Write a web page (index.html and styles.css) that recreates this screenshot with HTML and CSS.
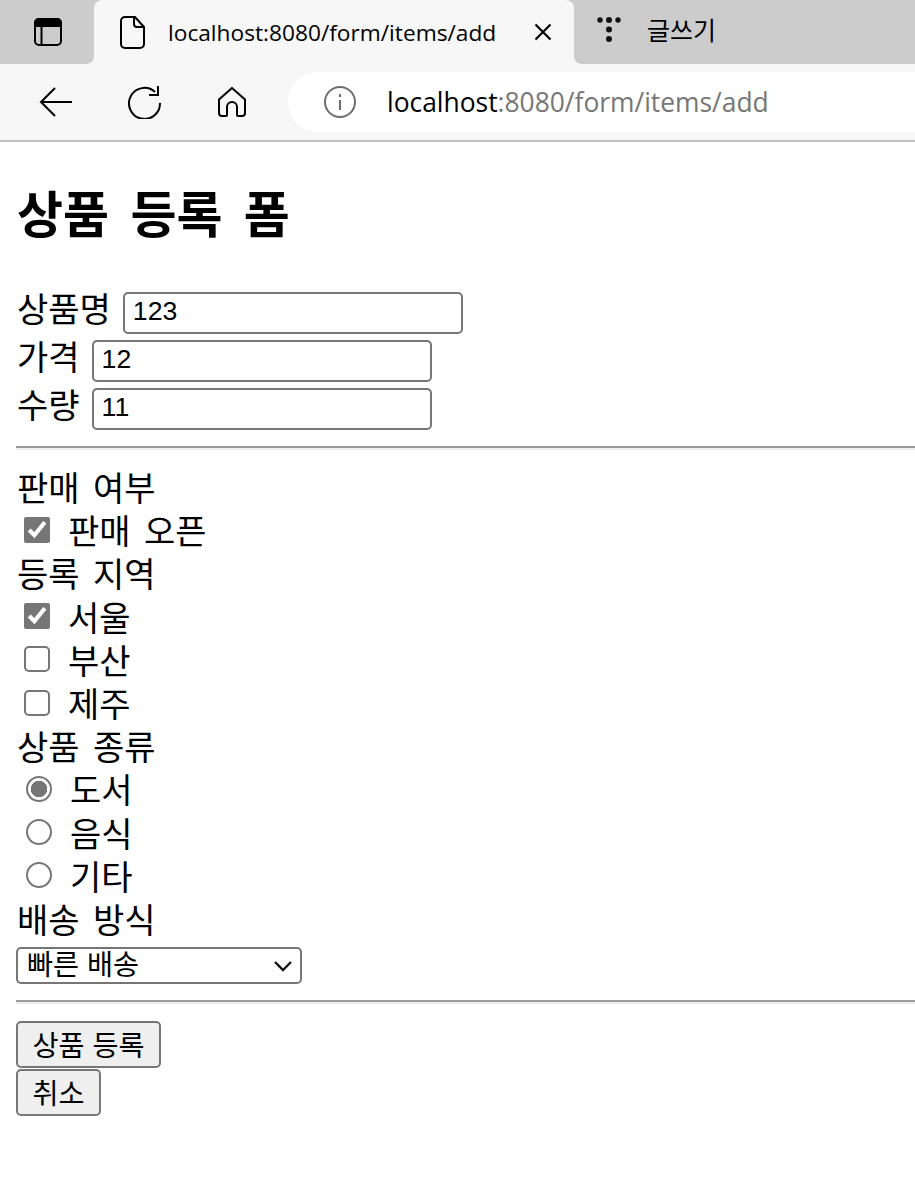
FILE: index.html
```html
<!DOCTYPE html>
<html lang="ko">
<head>
    <meta charset="UTF-8">
    <title>상품 등록 폼</title>
    <link rel="stylesheet" href="styles.css">
</head>
<body>
    <div class="tab-strip">
        <div class="sidebar-btn">
            <svg width="30" height="30" viewBox="0 0 30 30" fill="none" stroke="#000" stroke-width="2">
                <rect x="2" y="2" width="26" height="26" rx="4"/>
                <path d="M2 9V6a4 4 0 0 1 4-4h18a4 4 0 0 1 4 4v3z" fill="#000"/>
                <path d="M8.500 9v19"/>
            </svg>
        </div>
        <div class="tab">
            <svg width="26" height="34" viewBox="0 0 26 34" fill="none" stroke="#000" stroke-width="2">
                <path d="M5 2h10l9 10v17a4 4 0 0 1-4 4H5a4 4 0 0 1-4-4V6a4 4 0 0 1 4-4z"/>
                <path d="M14 2v7a3 3 0 0 0 3 3h7"/>
            </svg>
            <span class="tab-title">localhost:8080/form/items/add</span>
            <svg class="tab-close" width="18" height="18" viewBox="0 0 18 18" stroke="#000" stroke-width="2.200">
                <path d="M1.500 1.500l15 15M16.500 1.500l-15 15"/>
            </svg>
        </div>
        <div class="other-tab">
            <svg width="24" height="26" viewBox="0 0 24 26" fill="#111">
                <circle cx="3" cy="4" r="2.700"/>
                <circle cx="12" cy="4" r="3"/>
                <circle cx="21" cy="4" r="2.700"/>
                <circle cx="12" cy="13.500" r="3"/>
                <circle cx="12" cy="23" r="3"/>
            </svg>
            <span class="other-title">글쓰기</span>
        </div>
    </div>
    <div class="toolbar">
        <svg class="nav-back" width="34" height="30" viewBox="0 0 34 30" fill="none" stroke="#000" stroke-width="2">
            <path d="M33 15H2M16 1L2 15l14 14"/>
        </svg>
        <svg class="nav-reload" width="34" height="34" viewBox="0 0 34 34" fill="none" stroke="#000" stroke-width="2">
            <path d="M27 7A15.500 15.500 0 1 0 32 18"/>
            <path d="M30 1v9h-9"/>
        </svg>
        <svg class="nav-home" width="30" height="32" viewBox="0 0 30 32" fill="none" stroke="#000" stroke-width="2">
            <path d="M15 2L2 13.500V27a3 3 0 0 0 3 3h4a1 1 0 0 0 1-1v-8a5 5 0 0 1 10 0v8a1 1 0 0 0 1 1h4a3 3 0 0 0 3-3V13.500z"/>
        </svg>
        <div class="address">
            <svg width="32" height="32" viewBox="0 0 32 32" fill="none" stroke="#6e6e6e" stroke-width="2">
                <circle cx="16" cy="16" r="15"/>
                <path d="M16 14v10M16 8v3"/>
            </svg>
            <span class="url">localhost<span class="url-rest">:8080/form/items/add</span></span>
        </div>
    </div>

    <div class="page">
        <h1 class="page-title">상품 등록 폼</h1>
        <form>
            <div class="field"><label for="itemName">상품명</label><input id="itemName" class="text-input" type="text" value="123"></div>
            <div class="field"><label for="price">가격</label><input id="price" class="text-input" type="text" value="12"></div>
            <div class="field"><label for="quantity">수량</label><input id="quantity" class="text-input" type="text" value="11"></div>
            <hr class="divider divider-top">

            <div class="heading">판매 여부</div>
            <label class="choice"><input type="checkbox" checked>판매 오픈</label>
            <div class="heading">등록 지역</div>
            <label class="choice"><input type="checkbox" checked>서울</label>
            <label class="choice"><input type="checkbox">부산</label>
            <label class="choice"><input type="checkbox">제주</label>
            <div class="heading">상품 종류</div>
            <label class="choice choice-radio"><input type="radio" name="itemType" checked>도서</label>
            <label class="choice choice-radio"><input type="radio" name="itemType">음식</label>
            <label class="choice choice-radio"><input type="radio" name="itemType">기타</label>
            <div class="heading">배송 방식</div>
            <div class="select-wrap">
                <select class="delivery">
                    <option>빠른 배송</option>
                    <option>일반 배송</option>
                    <option>느린 배송</option>
                </select>
                <svg class="select-arrow" width="20" height="12" viewBox="0 0 20 12" fill="none" stroke="#111" stroke-width="2.400">
                    <path d="M2 2l8 8 8-8"/>
                </svg>
            </div>
            <hr class="divider divider-bottom">
            <button class="btn" type="submit">상품 등록</button>
            <button class="btn" type="button">취소</button>
        </form>
    </div>
</body>
</html>
```

FILE: styles.css
```css
html, body {
    margin: 0;
    overflow: hidden;
}
body {
    font-family: "Liberation Sans", "Noto Sans CJK KR", sans-serif;
    color: #000;
    background-color: #fff;
    height: 1184px;
}

/* browser chrome */
.tab-strip {
    display: flex;
    height: 64px;
    background-color: #cccccc;
}
.sidebar-btn {
    width: 94px;
    display: flex;
    align-items: center;
    justify-content: center;
    box-sizing: border-box;
    padding-left: 2px;
    padding-bottom: 1px;
}
.tab {
    width: 480px;
    display: flex;
    align-items: center;
    position: relative;
    background-color: #f7f7f7;
    border-radius: 8px 8px 0 0;
    padding-left: 26px;
    box-sizing: border-box;
}
.tab::before, .tab::after {
    content: "";
    position: absolute;
    bottom: 0;
    width: 7px;
    height: 7px;
}
.tab::before {
    left: -7px;
    background: radial-gradient(circle at 0 0, #cccccc 6.500px, #f7f7f7 7px);
}
.tab::after {
    right: -7px;
    background: radial-gradient(circle at 100% 0, #cccccc 6.500px, #f7f7f7 7px);
}
.tab-title {
    font-family: "Open Sans", sans-serif;
    font-size: 22.700px;
    margin-left: 22px;
    white-space: nowrap;
    flex: 1;
}
.tab-close {
    margin-right: 22px;
}
.other-tab {
    display: flex;
    align-items: center;
    padding-left: 23px;
    padding-bottom: 6px;
}
.other-title {
    font-family: "Noto Sans CJK KR", sans-serif;
    font-size: 25px;
    margin-left: 26px;
}
.toolbar {
    height: 76px;
    background-color: #f7f7f7;
    border-bottom: 2px solid #c0c0c0;
    display: flex;
    align-items: center;
}
.nav-back {
    margin-left: 39px;
}
.nav-reload {
    margin-left: 55px;
}
.nav-home {
    margin-left: 55px;
}
.address {
    flex: 1;
    height: 60px;
    margin-left: 41px;
    background-color: #fff;
    border-radius: 30px 0 0 30px;
    display: flex;
    align-items: center;
    padding-left: 36px;
}
.url {
    font-family: "Open Sans", sans-serif;
    font-size: 26.400px;
    margin-left: 31px;
    white-space: nowrap;
}
.url-rest {
    color: #767676;
}

/* form page */
.page {
    padding: 0 0 0 16px;
}
.page-title {
    font-size: 50px;
    line-height: 64px;
    margin: 42px 0 44px;
    padding-left: 1px;
    font-weight: 700;
    word-spacing: 7.500px;
}
.field {
    display: flex;
    align-items: flex-start;
    height: 48px;
    font-size: 34px;
}
.field label {
    line-height: 36px;
    margin-left: 1px;
    margin-right: 12px;
}
.text-input {
    width: 340px;
    height: 42px;
    box-sizing: border-box;
    border: 2px solid #767676;
    border-radius: 5px;
    padding: 0 8px 3px;
    margin: 0;
    font-family: inherit;
    font-size: 26.670px;
    color: #000;
}
.divider {
    border: 0;
    border-top: 2px solid #9a9a9a;
    border-bottom: 2px solid #eeeeee;
    margin: 0;
}
.divider-top {
    margin-top: 10px;
    margin-bottom: 15px;
}
.divider-bottom {
    margin-top: 16px;
    margin-bottom: 17px;
}
.heading, .choice {
    display: flex;
    align-items: center;
    height: 43.200px;
    font-size: 34px;
    word-spacing: 4px;
    white-space: pre;
}
.heading {
    padding-left: 1px;
}
.choice input {
    appearance: none;
    box-sizing: border-box;
    width: 26px;
    height: 26px;
    margin: 0 18px 0 8px;
    background-color: #fff;
    border: 2px solid #767676;
    border-radius: 5px;
}
.choice input[type="checkbox"]:checked {
    appearance: auto;
    accent-color: #767676;
}
.choice-radio input {
    margin: 0 18px 0 10px;
    border-radius: 50%;
}
.choice-radio input:checked {
    background: radial-gradient(circle, #767676 0 8px, #fff 8.500px);
}
.select-wrap {
    position: relative;
    width: 286px;
    height: 37px;
    margin-top: 7px;
}
.delivery {
    appearance: none;
    width: 100%;
    height: 100%;
    box-sizing: border-box;
    border: 2px solid #767676;
    border-radius: 5px;
    background-color: #fff;
    padding: 0 9px 3px;
    font-family: inherit;
    font-size: 28.300px;
    color: #000;
}
.select-arrow {
    position: absolute;
    right: 9px;
    top: 13px;
}
.btn {
    display: block;
    height: 47px;
    box-sizing: border-box;
    border: 2px solid #767676;
    border-radius: 5px;
    background-color: #efefef;
    padding: 0 14.500px 2px;
    margin: 0 0 1px;
    font-family: inherit;
    font-size: 28.300px;
    color: #000;
}
```
